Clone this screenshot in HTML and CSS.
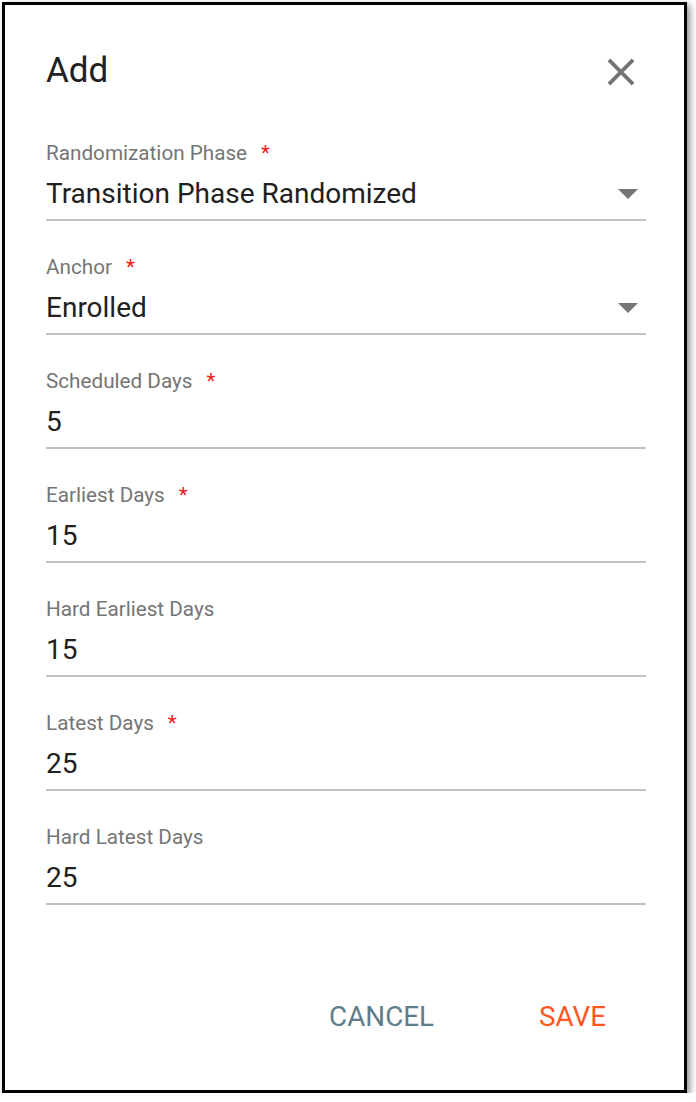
FILE: index.html
```html
<!DOCTYPE html>
<html lang="en">
<head>
    <meta charset="UTF-8">
    <title>Add</title>
    <link rel="stylesheet" href="styles.css">
</head>
<body>

<div class="dialog">
    <div class="dialog-header">
        <h1>Add</h1>
        <button class="close" type="button" aria-label="Close">
            <svg viewBox="0 0 24 24" width="46" height="46">
                <path d="M19 6.41L17.59 5 12 10.59 6.41 5 5 6.41 10.59 12 5 17.59 6.41 19 12 13.41 17.59 19 19 17.59 13.41 12z"/>
            </svg>
        </button>
    </div>

    <div class="fields">
        <div class="field">
            <label>Randomization Phase<span class="req">*</span></label>
            <div class="value select">
                <span>Transition Phase Randomized</span>
                <span class="arrow"></span>
            </div>
        </div>
        <div class="field">
            <label>Anchor<span class="req">*</span></label>
            <div class="value select">
                <span>Enrolled</span>
                <span class="arrow"></span>
            </div>
        </div>
        <div class="field">
            <label>Scheduled Days<span class="req">*</span></label>
            <div class="value">5</div>
        </div>
        <div class="field">
            <label>Earliest Days<span class="req">*</span></label>
            <div class="value">15</div>
        </div>
        <div class="field">
            <label>Hard Earliest Days</label>
            <div class="value">15</div>
        </div>
        <div class="field">
            <label>Latest Days<span class="req">*</span></label>
            <div class="value">25</div>
        </div>
        <div class="field">
            <label>Hard Latest Days</label>
            <div class="value">25</div>
        </div>
    </div>

    <div class="actions">
        <button class="btn btn-cancel" type="button">CANCEL</button>
        <button class="btn btn-save" type="button">SAVE</button>
    </div>
</div>

</body>
</html>
```

FILE: styles.css
```css
body {
    font-family: Roboto, "Liberation Sans", Arial, sans-serif;
    margin: 0;
    padding: 0;
    background-color: #fff;
}
.dialog {
    box-sizing: border-box;
    width: 685px;
    height: 1091px;
    margin: 2px 0 0 2px;
    border: 3px solid #000;
    background: #fff;
    box-shadow: 3px 3px 7px rgba(0, 0, 0, 0.45);
    padding: 42px 38px 52px 41px;
    display: flex;
    flex-direction: column;
}
.dialog-header {
    display: flex;
    justify-content: space-between;
    align-items: center;
}
h1 {
    margin: 0;
    font-size: 35px;
    line-height: 42px;
    font-weight: 400;
    color: #212121;
}
.close {
    border: none;
    background: none;
    padding: 0;
    margin: 2px 2px 0 0;
    width: 46px;
    height: 46px;
    cursor: pointer;
}
.close svg {
    display: block;
    fill: #757575;
}
.fields {
    margin-top: 46px;
}
.field {
    margin-bottom: 34px;
}
.field label {
    display: block;
    font-size: 20.7px;
    line-height: 24px;
    color: #757575;
}
.req {
    color: #f0201a;
    margin-left: 14px;
}
.value {
    margin-top: 12px;
    padding-bottom: 8px;
    border-bottom: 2px solid #c2c2c2;
    font-size: 28px;
    line-height: 34px;
    color: #212121;
}
.select {
    display: flex;
    justify-content: space-between;
    align-items: center;
}
.arrow {
    width: 0;
    height: 0;
    border-left: 10px solid transparent;
    border-right: 10px solid transparent;
    border-top: 10px solid #757575;
    margin-right: 8px;
}
.actions {
    margin-top: auto;
    display: flex;
    justify-content: flex-end;
    gap: 61px;
    padding-right: 18px;
}
.btn {
    border: none;
    background: none;
    font-family: inherit;
    font-size: 27.8px;
    line-height: 42px;
    height: 42px;
    padding: 0 22px;
    cursor: pointer;
}
.btn-cancel {
    color: #607d8b;
}
.btn-save {
    color: #ff5722;
}
```
